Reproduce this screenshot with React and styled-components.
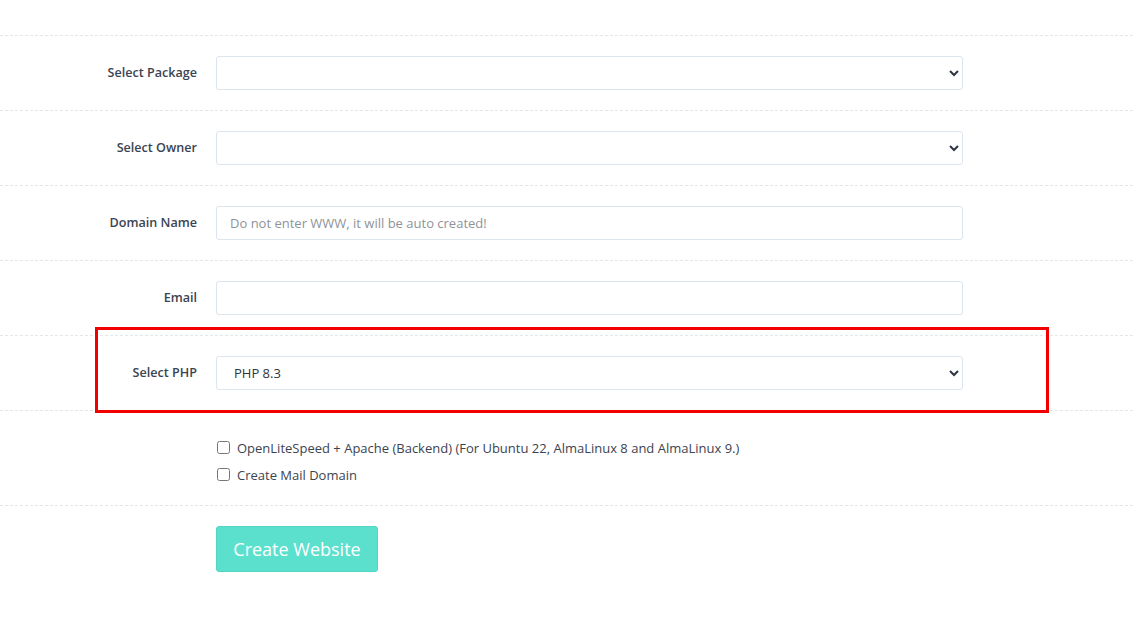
import React from 'react';
import styled, { createGlobalStyle } from 'styled-components';

const GlobalStyle = createGlobalStyle`
	body {
		margin: 0;
		background: #fff;
		font-family: 'Open Sans', 'Liberation Sans', sans-serif;
	}
`;

const Page = styled.div`
	padding-top: 35px;
	width: 1133px;
	height: 641px;
	box-sizing: border-box;
	overflow: hidden;
`;

const Form = styled.form`
	border-top: 1px dashed #e3e6ea;
`;

const Row = styled.div`
	position: relative;
	display: grid;
	grid-template-columns: 197px 747px;
	column-gap: 19px;
	align-items: center;
	height: ${(props) => props.height || 74}px;
	border-bottom: ${(props) => (props.last ? 'none' : '1px dashed #e3e6ea')};
	align-content: ${(props) => (props.top ? 'start' : 'center')};
	padding-top: ${(props) => props.padTop || 0}px;
	box-sizing: ${(props) => (props.top ? 'border-box' : 'content-box')};
`;

const Label = styled.label`
	text-align: right;
	font-size: 12.6px;
	font-weight: 600;
	color: #3b4452;
	margin-top: -2px;
`;

const fieldStyles = `
	width: 100%;
	height: 34px;
	box-sizing: border-box;
	border: 1px solid #dce4ee;
	border-radius: 3px;
	background: #fff;
	font-family: 'Open Sans', 'Liberation Sans', sans-serif;
	font-size: 13px;
	color: #2f3540;
	outline: none;
`;

const Select = styled.select`
	${fieldStyles}
	padding: 0 8px 0 13px;
`;

const Input = styled.input`
	${fieldStyles}
	padding: 0 13px;

	&::placeholder {
		color: #8e939a;
	}
`;

const Highlight = styled.div`
	position: absolute;
	top: -9px;
	bottom: -3px;
	left: 95px;
	width: 954px;
	border: 3px solid #f20000;
	box-sizing: border-box;
	pointer-events: none;
`;

const Checks = styled.div`
	grid-column: 2;
	display: flex;
	flex-direction: column;
`;

const Check = styled.label`
	display: flex;
	align-items: center;
	height: 27px;
	font-size: 13px;
	color: #3d4350;

	input {
		width: 13px;
		height: 13px;
		margin: 0 7px 0 1px;
	}
`;

const Button = styled.button`
	grid-column: 2;
	justify-self: start;
	width: 162px;
	height: 46px;
	border: 1px solid #52d6c3;
	border-radius: 3px;
	background: #5ce0ce;
	color: #fff;
	font-family: 'Open Sans', 'Liberation Sans', sans-serif;
	font-size: 18px;
	cursor: pointer;
`;

export default function App() {
	return (
		<Page>
			<GlobalStyle />
			<Form onSubmit={(e) => e.preventDefault()}>
				<Row>
					<Label>Select Package</Label>
					<Select defaultValue="">
						<option value=""></option>
					</Select>
				</Row>
				<Row>
					<Label>Select Owner</Label>
					<Select defaultValue="">
						<option value=""></option>
					</Select>
				</Row>
				<Row>
					<Label>Domain Name</Label>
					<Input placeholder="Do not enter WWW, it will be auto created!" />
				</Row>
				<Row>
					<Label>Email</Label>
					<Input />
				</Row>
				<Row>
					<Highlight />
					<Label>Select PHP</Label>
					<Select defaultValue="8.3">
						<option value="8.3">PHP 8.3</option>
					</Select>
				</Row>
				<Row height={95} padTop={23} top>
					<Checks>
						<Check>
							<input type="checkbox" />
							OpenLiteSpeed + Apache (Backend) (For Ubuntu 22, AlmaLinux 8 and AlmaLinux 9.)
						</Check>
						<Check>
							<input type="checkbox" />
							Create Mail Domain
						</Check>
					</Checks>
				</Row>
				<Row height={100} padTop={20} top last>
					<Button type="submit">Create Website</Button>
				</Row>
			</Form>
		</Page>
	);
}
